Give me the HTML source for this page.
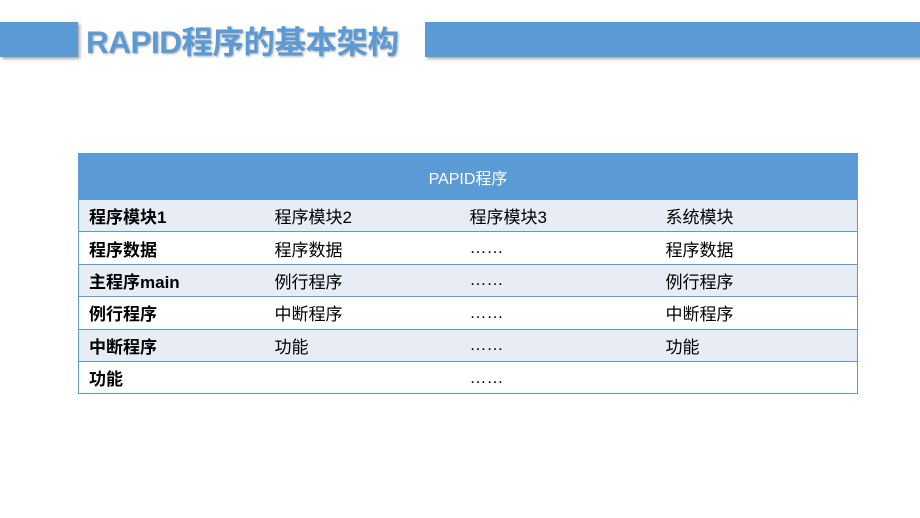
<!DOCTYPE html><html><head><style>
body{margin:0;width:920px;height:518px;background:#fff;position:relative;overflow:hidden;font-family:"Liberation Sans","Noto Sans CJK SC",sans-serif}
.bar{position:absolute;background:#5b9bd5;box-shadow:2px 2px 3px rgba(0,0,0,.35)}
.t{position:absolute;left:86px;top:17px;font-size:31.5px;font-weight:bold;color:#5b9bd5;text-shadow:1px 1px 2px rgba(0,0,0,.35);letter-spacing:-0.5px}
table{position:absolute;left:78px;top:153px;width:780px;border-collapse:collapse;border:1px solid #5b9bd5;font-size:17px;color:#000}
th{background:#5b9bd5;color:#fff;font-weight:normal;height:45px;font-size:16px;padding:0}
td{height:32.4px;padding:0 0 0 8px;border-top:1px solid #5b9bd5;white-space:nowrap;box-sizing:border-box}
tr:nth-child(even) td{background:#e8ecf5}
td:first-child{font-weight:bold;padding-left:10px}
</style></head><body>
<div class="bar" style="left:0;top:22px;width:78px;height:35px"></div>
<div class="bar" style="left:425px;top:22px;width:500px;height:35px"></div>
<div class="t">RAPID程序的基本架构</div>
<table>
<colgroup><col style="width:188px"><col style="width:195px"><col style="width:196px"><col></colgroup>
<tr><th colspan="4">PAPID程序</th></tr>
<tr><td>程序模块1</td><td>程序模块2</td><td>程序模块3</td><td>系统模块</td></tr>
<tr><td>程序数据</td><td>程序数据</td><td>……</td><td>程序数据</td></tr>
<tr><td>主程序main</td><td>例行程序</td><td>……</td><td>例行程序</td></tr>
<tr><td>例行程序</td><td>中断程序</td><td>……</td><td>中断程序</td></tr>
<tr><td>中断程序</td><td>功能</td><td>……</td><td>功能</td></tr>
<tr><td>功能</td><td></td><td>……</td><td></td></tr>
</table>
</body></html>
